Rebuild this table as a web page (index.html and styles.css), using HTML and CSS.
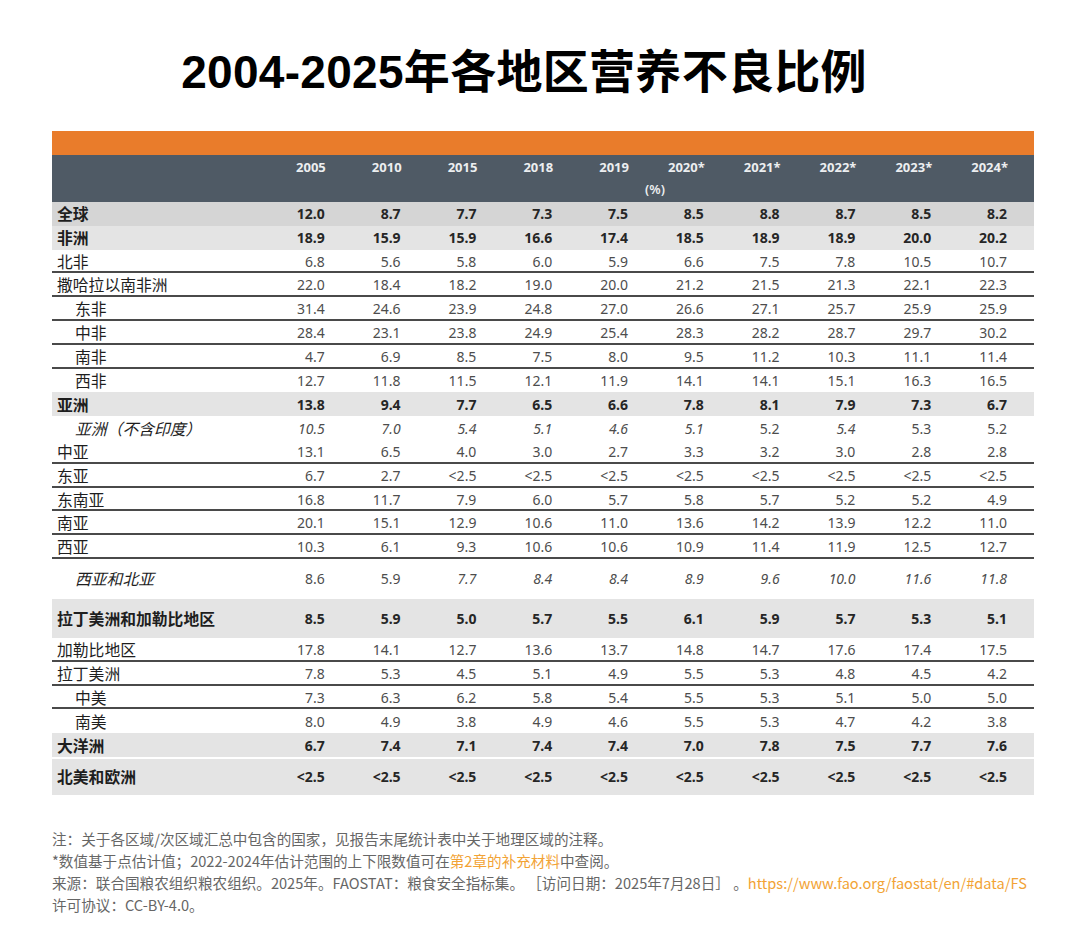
FILE: index.html
```html
<!DOCTYPE html>
<html lang="zh">
<head>
<meta charset="utf-8">
<title>2004-2025年各地区营养不良比例</title>
<link rel="stylesheet" href="styles.css">
</head>
<body>
<div class="page">
  <h1 class="title">2004-2025年各地区营养不良比例</h1>

  <div class="table">
    <div class="orange"></div>
    <div class="head">
      <div class="head-years">
        <span></span>
        <span>2005</span><span>2010</span><span>2015</span><span>2018</span><span>2019</span>
        <span>2020*</span><span>2021*</span><span>2022*</span><span>2023*</span><span>2024*</span>
      </div>
      <div class="head-unit">
        <span></span><span class="unit">(%)</span>
      </div>
    </div>

    <div class="row bold g1"><span class="lab">全球</span><span>12.0</span><span>8.7</span><span>7.7</span><span>7.3</span><span>7.5</span><span>8.5</span><span>8.8</span><span>8.7</span><span>8.5</span><span>8.2</span></div>
    <div class="row bold g2"><span class="lab">非洲</span><span>18.9</span><span>15.9</span><span>15.9</span><span>16.6</span><span>17.4</span><span>18.5</span><span>18.9</span><span>18.9</span><span>20.0</span><span>20.2</span></div>
    <div class="row ln"><span class="lab">北非</span><span>6.8</span><span>5.6</span><span>5.8</span><span>6.0</span><span>5.9</span><span>6.6</span><span>7.5</span><span>7.8</span><span>10.5</span><span>10.7</span></div>
    <div class="row ln"><span class="lab">撒哈拉以南非洲</span><span>22.0</span><span>18.4</span><span>18.2</span><span>19.0</span><span>20.0</span><span>21.2</span><span>21.5</span><span>21.3</span><span>22.1</span><span>22.3</span></div>
    <div class="row ln"><span class="lab ind">东非</span><span>31.4</span><span>24.6</span><span>23.9</span><span>24.8</span><span>27.0</span><span>26.6</span><span>27.1</span><span>25.7</span><span>25.9</span><span>25.9</span></div>
    <div class="row ln"><span class="lab ind">中非</span><span>28.4</span><span>23.1</span><span>23.8</span><span>24.9</span><span>25.4</span><span>28.3</span><span>28.2</span><span>28.7</span><span>29.7</span><span>30.2</span></div>
    <div class="row ln"><span class="lab ind">南非</span><span>4.7</span><span>6.9</span><span>8.5</span><span>7.5</span><span>8.0</span><span>9.5</span><span>11.2</span><span>10.3</span><span>11.1</span><span>11.4</span></div>
    <div class="row"><span class="lab ind">西非</span><span>12.7</span><span>11.8</span><span>11.5</span><span>12.1</span><span>11.9</span><span>14.1</span><span>14.1</span><span>15.1</span><span>16.3</span><span>16.5</span></div>
    <div class="row bold g2"><span class="lab">亚洲</span><span>13.8</span><span>9.4</span><span>7.7</span><span>6.5</span><span>6.6</span><span>7.8</span><span>8.1</span><span>7.9</span><span>7.3</span><span>6.7</span></div>
    <div class="row"><span class="lab ind it">亚洲（不含印度）</span><span class="it">10.5</span><span class="it">7.0</span><span class="it">5.4</span><span class="it">5.1</span><span class="it">4.6</span><span class="it">5.1</span><span>5.2</span><span class="it">5.4</span><span>5.3</span><span>5.2</span></div>
    <div class="row ln"><span class="lab">中亚</span><span>13.1</span><span>6.5</span><span>4.0</span><span>3.0</span><span>2.7</span><span>3.3</span><span>3.2</span><span>3.0</span><span>2.8</span><span>2.8</span></div>
    <div class="row ln"><span class="lab">东亚</span><span>6.7</span><span>2.7</span><span>&lt;2.5</span><span>&lt;2.5</span><span>&lt;2.5</span><span>&lt;2.5</span><span>&lt;2.5</span><span>&lt;2.5</span><span>&lt;2.5</span><span>&lt;2.5</span></div>
    <div class="row ln"><span class="lab">东南亚</span><span>16.8</span><span>11.7</span><span>7.9</span><span>6.0</span><span>5.7</span><span>5.8</span><span>5.7</span><span>5.2</span><span>5.2</span><span>4.9</span></div>
    <div class="row ln"><span class="lab">南亚</span><span>20.1</span><span>15.1</span><span>12.9</span><span>10.6</span><span>11.0</span><span>13.6</span><span>14.2</span><span>13.9</span><span>12.2</span><span>11.0</span></div>
    <div class="row ln"><span class="lab">西亚</span><span>10.3</span><span>6.1</span><span>9.3</span><span>10.6</span><span>10.6</span><span>10.9</span><span>11.4</span><span>11.9</span><span>12.5</span><span>12.7</span></div>
    <div class="row tall"><span class="lab ind it">西亚和北亚</span><span>8.6</span><span>5.9</span><span class="it">7.7</span><span class="it">8.4</span><span class="it">8.4</span><span class="it">8.9</span><span class="it">9.6</span><span class="it">10.0</span><span class="it">11.6</span><span class="it">11.8</span></div>
    <div class="row bold g2 tall2"><span class="lab">拉丁美洲和加勒比地区</span><span>8.5</span><span>5.9</span><span>5.0</span><span>5.7</span><span>5.5</span><span>6.1</span><span>5.9</span><span>5.7</span><span>5.3</span><span>5.1</span></div>
    <div class="row ln"><span class="lab">加勒比地区</span><span>17.8</span><span>14.1</span><span>12.7</span><span>13.6</span><span>13.7</span><span>14.8</span><span>14.7</span><span>17.6</span><span>17.4</span><span>17.5</span></div>
    <div class="row ln"><span class="lab">拉丁美洲</span><span>7.8</span><span>5.3</span><span>4.5</span><span>5.1</span><span>4.9</span><span>5.5</span><span>5.3</span><span>4.8</span><span>4.5</span><span>4.2</span></div>
    <div class="row ln"><span class="lab ind">中美</span><span>7.3</span><span>6.3</span><span>6.2</span><span>5.8</span><span>5.4</span><span>5.5</span><span>5.3</span><span>5.1</span><span>5.0</span><span>5.0</span></div>
    <div class="row"><span class="lab ind">南美</span><span>8.0</span><span>4.9</span><span>3.8</span><span>4.9</span><span>4.6</span><span>5.5</span><span>5.3</span><span>4.7</span><span>4.2</span><span>3.8</span></div>
    <div class="row bold g2"><span class="lab">大洋洲</span><span>6.7</span><span>7.4</span><span>7.1</span><span>7.4</span><span>7.4</span><span>7.0</span><span>7.8</span><span>7.5</span><span>7.7</span><span>7.6</span></div>
    <div class="row bold g2 tall3"><span class="lab">北美和欧洲</span><span>&lt;2.5</span><span>&lt;2.5</span><span>&lt;2.5</span><span>&lt;2.5</span><span>&lt;2.5</span><span>&lt;2.5</span><span>&lt;2.5</span><span>&lt;2.5</span><span>&lt;2.5</span><span>&lt;2.5</span></div>
  </div>

  <div class="notes">
    <p>注：关于各区域/次区域汇总中包含的国家，见报告末尾统计表中关于地理区域的注释。</p>
    <p>*数值基于点估计值；2022-2024年估计范围的上下限数值可在<span class="link">第2章的补充材料</span>中查阅。</p>
    <p>来源：联合国粮农组织粮农组织。2025年。FAOSTAT：粮食安全指标集。 ［访问日期：2025年7月28日］ 。<span class="link">https://www.fao.org/faostat/en/#data/FS</span></p>
    <p>许可协议：CC-BY-4.0。</p>
  </div>
</div>
</body>
</html>
```

FILE: styles.css
```css
* { box-sizing: border-box; }

html, body {
  margin: 0;
  padding: 0;
  background: #ffffff;
}

.page {
  width: 1080px;
  padding: 49px 46px 0 52px;
}

.title {
  margin: 0;
  padding-right: 38px;
  font-family: "Liberation Sans", "Noto Sans CJK SC", sans-serif;
  font-weight: 700;
  font-size: 46px;
  line-height: 46px;
  text-align: center;
  color: #000;
  letter-spacing: 0.3px;
}

.table {
  margin-top: 36px;
  width: 982px;
}

.orange {
  height: 24px;
  background: #e97c2b;
}

.head {
  height: 47px;
  background: #4f5a65;
  color: #eceef0;
  font-family: "Noto Sans", sans-serif;
  font-weight: 700;
  font-size: 13px;
}

.head-years,
.row {
  display: grid;
  grid-template-columns: 224px repeat(10, 1fr);
}

.head-years {
  height: 21px;
  align-items: end;
}

.head-years span {
  text-align: right;
  padding-right: 26px;
  line-height: 18px;
}

.head-unit {
  display: grid;
  grid-template-columns: 224px 1fr;
  height: 26px;
}

.unit {
  text-align: center;
  line-height: 26px;
  font-weight: 600;
}

.row {
  height: 23.8px;
  align-items: center;
  font-family: "Noto Sans", "Noto Sans CJK SC", sans-serif;
  font-size: 14px;
  color: #4d4d4d;
}

.row span {
  text-align: right;
  padding-right: 27px;
  white-space: nowrap;
}

.row .lab {
  text-align: left;
  padding-left: 5px;
  padding-right: 0;
  font-family: "Noto Sans CJK SC", sans-serif;
  font-size: 15.8px;
  color: #1e1e1e;
}

.row .ind { padding-left: 23px; }

.it { font-style: italic; }

.bold { font-weight: 700; color: #262626; }
.bold .lab { font-weight: 700; }

.g1 { background: #d5d5d5; }
.g2 { background: #e4e4e4; }

.ln { border-bottom: 2px solid #4a4a4a; }

.tall { height: 40px; }
.tall2 { height: 39px; }
.tall3 { height: 38px; border-top: 2px solid #ffffff; }

.notes {
  margin-top: 33px;
  font-family: "Noto Sans CJK SC", sans-serif;
  font-size: 14.6px;
  line-height: 22px;
  color: #666666;
}

.notes p {
  margin: 0;
  white-space: nowrap;
}

.link { color: #f2a335; }
```
